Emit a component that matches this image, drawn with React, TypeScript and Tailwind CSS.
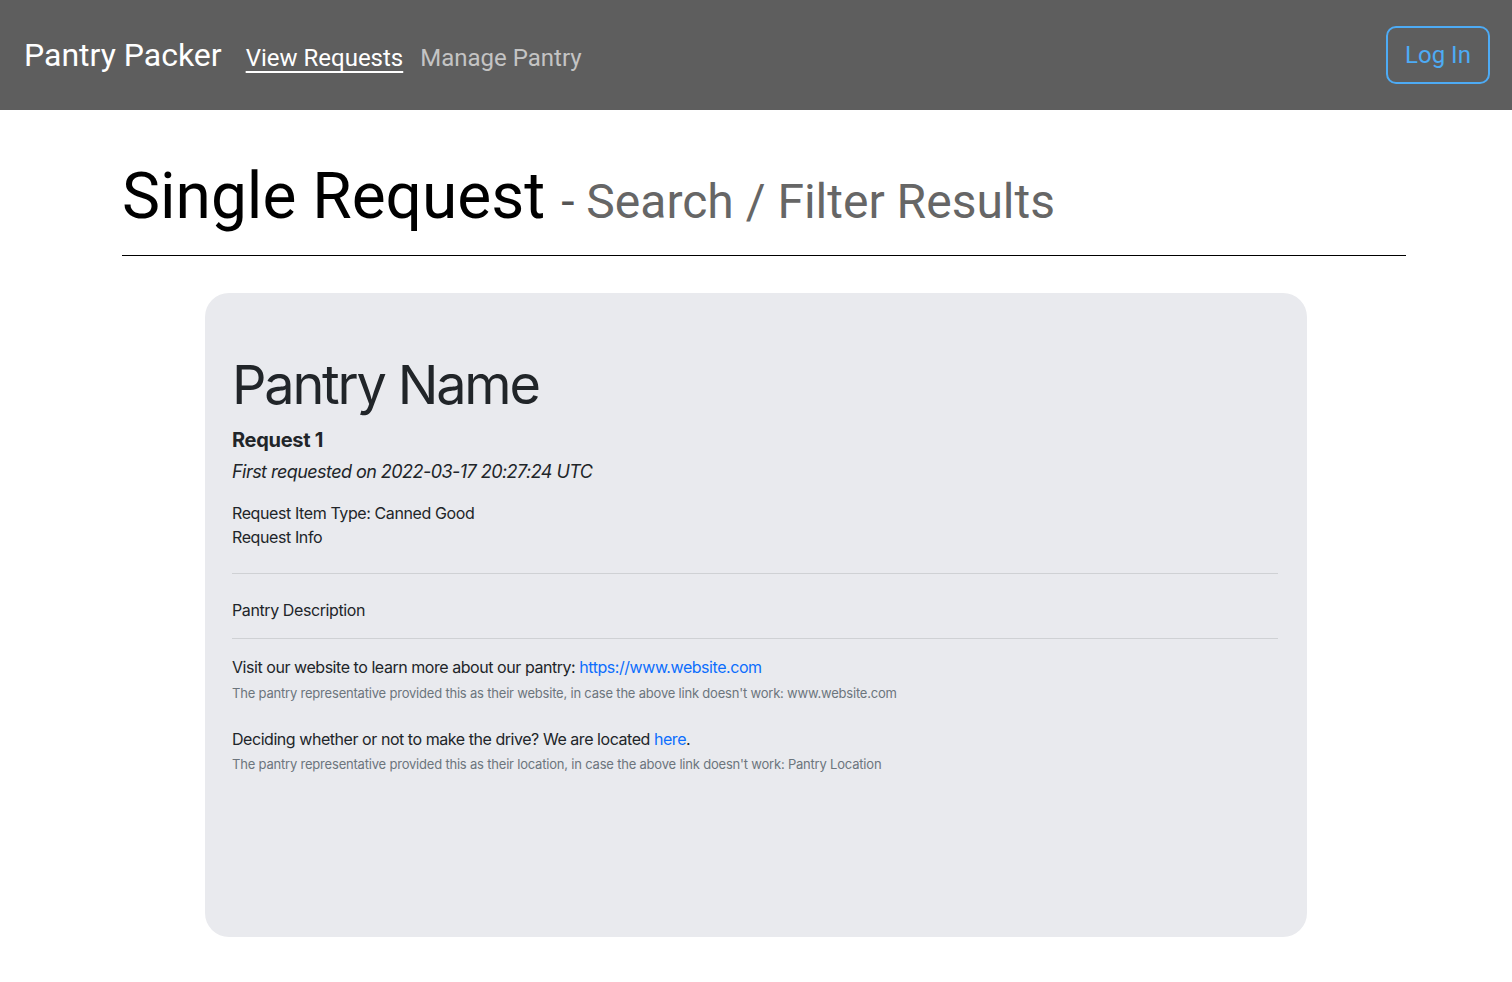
import React from "react";

export default function App() {
  return (
    <div className="min-h-screen bg-white font-['Roboto',sans-serif]">
      {/* Nav */}
      <nav className="h-[110px] bg-[#5e5e5e] flex items-center justify-between pl-6 pr-[22px]">
        <div className="flex items-baseline">
          <span className="text-[32px] text-white">Pantry Packer</span>
          <a href="#" className="ml-[24px] text-[24px] text-white underline underline-offset-[5px]">View Requests</a>
          <a href="#" className="ml-[17px] text-[24px] text-[#c4c4c4]">Manage Pantry</a>
        </div>
        <button className="w-[104px] h-[58px] border-2 border-[#4dabf5] rounded-[10px] text-[24px] text-[#4dabf5]">Log In</button>
      </nav>

      {/* Heading */}
      <div className="ml-[122px] w-[1284px] pt-[55px]">
        <h1 className="flex items-baseline text-black">
          <span className="text-[64px] leading-none">Single Request</span>
          <span className="ml-[16px] text-[48px] text-[#555]">- <span className="text-[#666]">Search / Filter Results</span></span>
        </h1>
        <div className="mt-[17px] border-t border-black" />
      </div>

      {/* Card */}
      <div className="flex justify-center pt-[37px] pb-[40px]">
        <div className="w-[1102px] h-[644px] bg-[#e9eaee] rounded-[24px] pl-[27px] pr-[29px] pt-[52px] text-[#212529] font-['Inter',sans-serif]">
          <h2 className="text-[54px] leading-[80px] tracking-[-2.2px]">Pantry Name</h2>
          <p className="text-[20px] font-bold leading-[30px] tracking-[-0.3px]">Request 1</p>
          <p className="mt-[2px] text-[18px] italic leading-[30px] tracking-[-0.55px]">First requested on 2022-03-17 20:27:24 UTC</p>
          <div className="mt-[14px] text-[16px] leading-[24px] tracking-[-0.4px]">
            <p>Request Item Type: Canned Good</p>
            <p>Request Info</p>
          </div>
          <div className="mt-[24px] border-t border-[#cfd1d4]" />
          <p className="mt-[24px] text-[16px] leading-[24px] tracking-[-0.4px]">Pantry Description</p>
          <div className="mt-[16px] border-t border-[#cfd1d4]" />
          <p className="mt-[16px] text-[16px] leading-[24px] tracking-[-0.45px]">
            Visit our website to learn more about our pantry: <a href="#" className="text-[#0d6efd]">https://www.website.com</a>
          </p>
          <p className="mt-[4px] text-[13px] leading-[20px] tracking-[-0.2px] text-[#6c757d]">The pantry representative provided this as their website, in case the above link doesn't work: www.website.com</p>
          <p className="mt-[24px] text-[16px] leading-[24px] tracking-[-0.45px]">
            Deciding whether or not to make the drive? We are located <a href="#" className="text-[#0d6efd]">here</a>.
          </p>
          <p className="mt-[3px] text-[13px] leading-[20px] tracking-[-0.2px] text-[#6c757d]">The pantry representative provided this as their location, in case the above link doesn't work: Pantry Location</p>
        </div>
      </div>
    </div>
  );
}
